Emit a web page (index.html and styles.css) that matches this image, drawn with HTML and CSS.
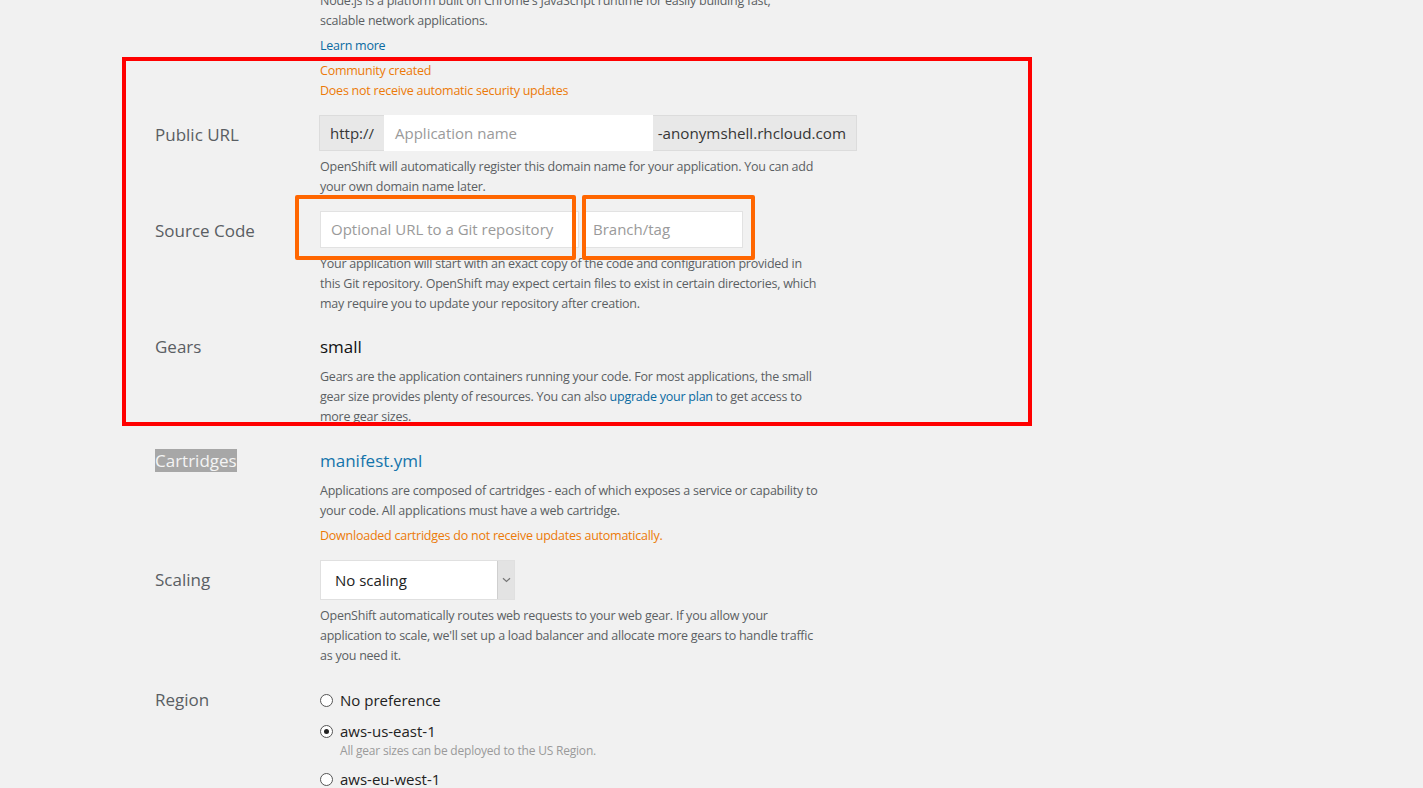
FILE: index.html
```html
<!DOCTYPE html>
<html>
<head>
<meta charset="utf-8">
<link rel="stylesheet" href="styles.css">
</head>
<body>
<div class="page">
  <div class="form">
    <div class="row intro">
      <div class="label"></div>
      <div class="content">
        <p class="help">Node.js is a platform built on Chrome's JavaScript runtime for easily building fast,<br>scalable network applications.</p>
        <p class="help"><a class="link" href="#">Learn more</a></p>
        <p class="help warn">Community created</p>
        <p class="help warn">Does not receive automatic security updates</p>
      </div>
    </div>

    <div class="row row-url">
      <div class="label tall">Public URL</div>
      <div class="content">
        <div class="input-group">
          <span class="addon addon-left">http://</span>
          <span class="input ph url-input">Application name</span>
          <span class="addon addon-right">-anonymshell.rhcloud.com</span>
        </div>
        <p class="help after">OpenShift will automatically register this domain name for your application. You can add your own domain name later.</p>
      </div>
    </div>

    <div class="row row-src">
      <div class="label tall">Source Code</div>
      <div class="content">
        <div class="src-inputs">
          <span class="input ph git-input">Optional URL to a Git repository</span>
          <span class="input ph branch-input">Branch/tag</span>
        </div>
        <p class="help after">Your application will start with an exact copy of the code and configuration provided in this Git repository. OpenShift may expect certain files to exist in certain directories, which may require you to update your repository after creation.</p>
      </div>
    </div>

    <div class="row row-gears">
      <div class="label mid">Gears</div>
      <div class="content">
        <div class="value">small</div>
        <p class="help after2">Gears are the application containers running your code. For most applications, the small gear size provides plenty of resources. You can also <a class="link" href="#">upgrade your plan</a> to get access to more gear sizes.</p>
      </div>
    </div>

    <div class="row row-cart">
      <div class="label mid"><span class="selected">Cartridges</span></div>
      <div class="content">
        <div class="value"><a class="link big" href="#">manifest.yml</a></div>
        <p class="help after2">Applications are composed of cartridges - each of which exposes a service or capability to your code. All applications must have a web cartridge.</p>
        <p class="help warn spaced">Downloaded cartridges do not receive updates automatically.</p>
      </div>
    </div>

    <div class="row row-scale">
      <div class="label select-h">Scaling</div>
      <div class="content">
        <div class="select">
          <span class="select-text">No scaling</span>
          <span class="select-btn"><svg width="9" height="6" viewBox="0 0 9 6"><path d="M1 1.2 L4.5 4.5 L8 1.2" fill="none" stroke="#777" stroke-width="1.2"/></svg></span>
        </div>
        <p class="help after">OpenShift automatically routes web requests to your web gear. If you allow your application to scale, we'll set up a load balancer and allocate more gears to handle traffic as you need it.</p>
      </div>
    </div>

    <div class="row row-region">
      <div class="label mid">Region</div>
      <div class="content">
        <div class="radio"><span class="circle"></span><span class="radio-text">No preference</span></div>
        <div class="radio r2"><span class="circle checked"></span><span class="radio-text">aws-us-east-1</span></div>
        <div class="radio-note">All gear sizes can be deployed to the US Region.</div>
        <div class="radio r3"><span class="circle"></span><span class="radio-text">aws-eu-west-1</span></div>
      </div>
    </div>
  </div>

  <div class="mark mark-red"></div>
  <div class="mark mark-orange mark-git"></div>
  <div class="mark mark-orange mark-branch"></div>
</div>
</body>
</html>
```

FILE: styles.css
```css
html, body {
  margin: 0;
  padding: 0;
  background: #f1f1f1;
  height: 100%;
  overflow: hidden;
}
body {
  font-family: "Open Sans", "Liberation Sans", sans-serif;
  color: #4d5258;
}
.page {
  position: relative;
  height: 788px;
  overflow: hidden;
}
.form {
  padding-left: 155px;
  margin-top: -10px;
}
.row {
  display: grid;
  grid-template-columns: 165px 500px;
}
.label {
  font-size: 17px;
  color: #5a5e63;
}
.label.tall { line-height: 36px; padding-top: 2px; }
.label.mid { line-height: 24px; }
.label.select-h { line-height: 40px; }
.content { min-width: 0; }
.help {
  margin: 0;
  padding-top: 1px;
  margin-bottom: -1px;
  font-size: 12.5px;
  line-height: 20px;
  color: #5b5f63;
  letter-spacing: -0.24px;
}
.help.after { margin-top: 5px; }
.help.after2 { margin-top: 7px; }
.help.spaced { margin-top: 5px; }
.help.warn { color: #ec7a08; }
.link { color: #0a6aa1; text-decoration: none; }
.link.big { font-size: 17px; color: #1474ab; letter-spacing: 0; }

.intro .help:nth-child(2) { margin-top: 5px; }
.intro .help:nth-child(3) { margin-top: 5px; }

.row-url { margin-top: 15px; }
.input-group {
  display: flex;
  height: 36px;
  width: 538px;
  box-sizing: border-box;
  margin-left: -1px;
}
.addon {
  background: #e8e8e8;
  border: 1px solid #dcdcdc;
  font-size: 15px;
  line-height: 34px;
  color: #363636;
  padding: 0 10px;
}
.addon-left { border-right: none; border-radius: 1px 0 0 1px; }
.addon-right { border-left: none; padding: 0 10px 0 5px; font-size: 15.2px; }
.input {
  background: #fff;
  border: 1px solid #e2e2e2;
  box-sizing: border-box;
  font-size: 15px;
  display: block;
  padding: 0 10px;
  color: #999;
}
.url-input {
  flex: 1;
  line-height: 34px;
  border-color: #fff;
}
.ph { color: #9a9a9a; }

.row-src { margin-top: 15px; }
.src-inputs {
  display: flex;
  gap: 4px;
  height: 37px;
}
.git-input { width: 259px; line-height: 35px; }
.branch-input { width: 160px; line-height: 35px; padding-left: 9px; }

.row-gears { margin-top: 22px; }
.value {
  font-size: 17px;
  line-height: 24px;
  color: #111;
}
.row-cart { margin-top: 23px; }
.selected {
  background: #a7a7a7;
  color: #f4f4f4;
}
.row-scale { margin-top: 15px; }
.select {
  display: flex;
  width: 195px;
  height: 40px;
  box-sizing: border-box;
  background: #fff;
  border: 1px solid #e0e0e0;
}
.select-text {
  flex: 1;
  font-size: 15px;
  line-height: 38px;
  padding-left: 14px;
  color: #222;
}
.select-btn {
  width: 16px;
  background: #e3e3e3;
  border-left: 1px solid #cfcfcf;
  display: flex;
  align-items: center;
  justify-content: center;
}
.row-region { margin-top: 23px; }
.radio {
  display: flex;
  align-items: center;
  height: 24px;
  font-size: 15px;
  color: #222;
}
.radio.r2 { margin-top: 7px; }
.radio.r3 { margin-top: 10px; }
.circle {
  width: 11px;
  height: 11px;
  border: 1px solid #555;
  border-radius: 50%;
  background: #fff;
  margin-right: 7px;
  position: relative;
  box-sizing: content-box;
}
.circle.checked::after {
  content: "";
  position: absolute;
  left: 3px;
  top: 3px;
  width: 5px;
  height: 5px;
  border-radius: 50%;
  background: #222;
}
.radio-note {
  padding-left: 20px;
  padding-top: 1px;
  margin-bottom: -1px;
  font-size: 12px;
  line-height: 14px;
  color: #9a9a9a;
  letter-spacing: -0.2px;
}

.mark {
  position: absolute;
  box-sizing: border-box;
  pointer-events: none;
}
.mark-red {
  left: 122px;
  top: 57px;
  width: 910px;
  height: 369px;
  border: 4px solid #ff0000;
}
.mark-orange {
  border: 4px solid #ff6600;
  border-radius: 2px;
  top: 195px;
  height: 65px;
}
.mark-git { left: 295px; width: 281px; }
.mark-branch { left: 582px; width: 173px; }
```
